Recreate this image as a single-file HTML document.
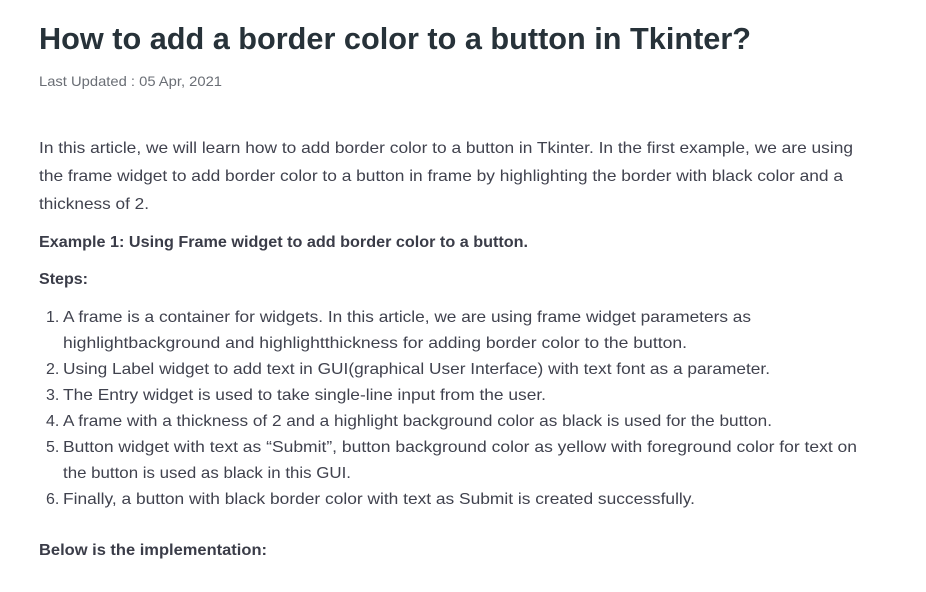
<!DOCTYPE html>
<html><head><meta charset="utf-8"><style>
html,body{margin:0;padding:0;background:#fff;width:926px;height:592px;overflow:hidden}
svg{display:block}
text{font-family:"Liberation Sans",sans-serif;fill:#40424e;font-size:16px}
.t{font-size:31px;font-weight:bold;fill:#273239}
.d{font-size:14px;fill:#6a6e75}
.b{font-weight:bold;fill:#3a3c48}
</style></head><body>
<svg width="926" height="592" viewBox="0 0 926 592" xmlns="http://www.w3.org/2000/svg">
<text class="t" x="39" y="49" textLength="712" lengthAdjust="spacingAndGlyphs">How to add a border color to a button in Tkinter?</text>
<text class="d" x="39" y="86" textLength="183" lengthAdjust="spacingAndGlyphs">Last Updated : 05 Apr, 2021</text>
<text x="39" y="153" textLength="814" lengthAdjust="spacingAndGlyphs">In this article, we will learn how to add border color to a button in Tkinter. In the first example, we are using</text>
<text x="39" y="181" textLength="804" lengthAdjust="spacingAndGlyphs">the frame widget to add border color to a button in frame by highlighting the border with black color and a</text>
<text x="39" y="209" textLength="110" lengthAdjust="spacingAndGlyphs">thickness of 2.</text>
<text class="b" x="39" y="247" textLength="489" lengthAdjust="spacingAndGlyphs">Example 1: Using Frame widget to add border color to a button.</text>
<text class="b" x="39" y="284" textLength="49" lengthAdjust="spacingAndGlyphs">Steps:</text>
<text x="46" y="322">1.</text>
<text x="63" y="322" textLength="688" lengthAdjust="spacingAndGlyphs">A frame is a container for widgets. In this article, we are using frame widget parameters as</text>
<text x="63" y="348" textLength="624" lengthAdjust="spacingAndGlyphs">highlightbackground and highlightthickness for adding border color to the button.</text>
<text x="46" y="374">2.</text>
<text x="63" y="374" textLength="707" lengthAdjust="spacingAndGlyphs">Using Label widget to add text in GUI(graphical User Interface) with text font as a parameter.</text>
<text x="46" y="400">3.</text>
<text x="63" y="400" textLength="483" lengthAdjust="spacingAndGlyphs">The Entry widget is used to take single-line input from the user.</text>
<text x="46" y="426">4.</text>
<text x="63" y="426" textLength="709" lengthAdjust="spacingAndGlyphs">A frame with a thickness of 2 and a highlight background color as black is used for the button.</text>
<text x="46" y="452">5.</text>
<text x="63" y="452" textLength="794" lengthAdjust="spacingAndGlyphs">Button widget with text as “Submit”, button background color as yellow with foreground color for text on</text>
<text x="63" y="478" textLength="288" lengthAdjust="spacingAndGlyphs">the button is used as black in this GUI.</text>
<text x="46" y="504">6.</text>
<text x="63" y="504" textLength="632" lengthAdjust="spacingAndGlyphs">Finally, a button with black border color with text as Submit is created successfully.</text>
<text class="b" x="39" y="555" textLength="228" lengthAdjust="spacingAndGlyphs">Below is the implementation:</text>
</svg>
</body></html>
